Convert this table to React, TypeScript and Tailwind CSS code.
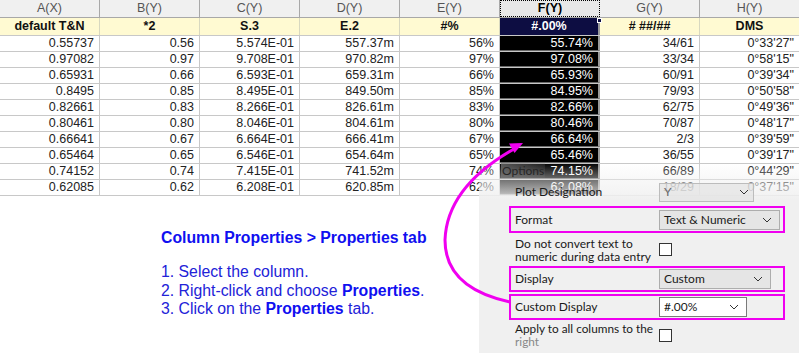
import React from "react";

const cols = ["A(X)", "B(Y)", "C(Y)", "D(Y)", "E(Y)", "F(Y)", "G(Y)", "H(Y)"];
const formats = ["default T&N", "*2", "S.3", "E.2", "#%", "#.00%", "# ##/##", "DMS"];

const rows = [
  ["0.55737", "0.56", "5.574E-01", "557.37m", "56%", "55.74%", "34/61", "0°33'27\""],
  ["0.97082", "0.97", "9.708E-01", "970.82m", "97%", "97.08%", "33/34", "0°58'15\""],
  ["0.65931", "0.66", "6.593E-01", "659.31m", "66%", "65.93%", "60/91", "0°39'34\""],
  ["0.8495", "0.85", "8.495E-01", "849.50m", "85%", "84.95%", "79/93", "0°50'58\""],
  ["0.82661", "0.83", "8.266E-01", "826.61m", "83%", "82.66%", "62/75", "0°49'36\""],
  ["0.80461", "0.80", "8.046E-01", "804.61m", "80%", "80.46%", "70/87", "0°48'17\""],
  ["0.66641", "0.67", "6.664E-01", "666.41m", "67%", "66.64%", "2/3", "0°39'59\""],
  ["0.65464", "0.65", "6.546E-01", "654.64m", "65%", "65.46%", "36/55", "0°39'17\""],
  ["0.74152", "0.74", "7.415E-01", "741.52m", "74%", "74.15%", "66/89", "0°44'29\""],
  ["0.62085", "0.62", "6.208E-01", "620.85m", "62%", "62.08%", "18/29", "0°37'15\""],
];

const SEL = 5;

function Chevron() {
  return (
    <svg width="10" height="6" viewBox="0 0 10 6" className="shrink-0">
      <path d="M1 1 L5 5 L9 1" fill="none" stroke="#333" strokeWidth="1" />
    </svg>
  );
}

function Dropdown({ value, width, white }: { value: string; width: string; white?: boolean }) {
  return (
    <div
      className={`${width} h-[20px] flex items-center justify-between pl-[4px] pr-[7px] border ${
        white ? "bg-white border-[#7a7a7a]" : "bg-[#e5e5e5] border-[#adadad]"
      }`}
    >
      <span>{value}</span>
      <Chevron />
    </div>
  );
}

function Checkbox() {
  return <div className="w-[13px] h-[13px] bg-white border border-[#333] shrink-0" />;
}

export default function App() {
  return (
    <div className="relative w-[799px] h-[353px] overflow-hidden bg-white">
      {/* worksheet */}
      <div className="font-['Liberation_Sans',Arial,sans-serif] text-[12.5px] leading-none">
        <div className="flex h-[18px] bg-[#f0f0f0] border-b border-[#a8a8a8]">
          {cols.map((c, i) => (
            <div
              key={c}
              className={`flex items-center justify-center text-[#555] ${i === 7 ? "w-[99px]" : "w-[100px] border-r border-[#a8a8a8]"} ${
                i === SEL ? "border border-dotted border-black text-black font-bold bg-[#e8e8e8]" : ""
              }`}
            >
              {c}
            </div>
          ))}
        </div>
        <div className="flex h-[18px] bg-[#fffad2] border-b border-[#c8c8c8]">
          {formats.map((f, i) => (
            <div
              key={f}
              className={`relative flex items-center justify-center font-bold ${i === 7 ? "w-[99px]" : "w-[100px] border-r border-[#d8d8c0]"} ${
                i === SEL ? "bg-[#0d0d42] text-white border-r-2 border-r-[#9a9a9a]" : "text-[#111]"
              }`}
            >
              {f}
              {i === SEL && (
                <div className="absolute right-[-4px] top-[0px] w-[5px] h-[5px] bg-[#0d0d42] border border-white" />
              )}
            </div>
          ))}
        </div>
        {rows.map((r, ri) => (
          <div key={ri} className="flex h-[16px] border-b border-[#c8c8c8]">
            {r.map((v, i) => (
              <div
                key={i}
                className={`flex items-center justify-end pr-[5px] ${i === 7 ? "w-[99px]" : "w-[100px] border-r border-[#c8c8c8]"} ${
                  i === SEL ? "bg-black text-white border-r-2 border-r-[#9a9a9a] border-b border-b-[#6a6a6a]" : "text-[#222]"
                }`}
              >
                {v}
              </div>
            ))}
          </div>
        ))}
      </div>

      {/* instructions */}
      <div className="pl-[161px] pt-[33px] font-['Liberation_Sans',Arial,sans-serif]">
        <div className="text-[15.8px] font-bold text-[#1010f0] leading-[18px]">
          Column Properties &gt; Properties tab
        </div>
        <ol className="mt-[16px] text-[15.8px] text-[#2222d8] leading-[18.5px]">
          <li>1. Select the column.</li>
          <li>
            2. Right-click and choose <b className="text-[#1010f0]">Properties</b>.
          </li>
          <li>
            3. Click on the <b className="text-[#1010f0]">Properties</b> tab.
          </li>
        </ol>
      </div>

      {/* properties dialog excerpt */}
      <div className="absolute left-[479px] top-[163px] w-[320px] h-[190px] bg-[linear-gradient(to_bottom,rgba(240,240,240,0)_0px,rgba(240,240,240,0.5)_18px,rgba(240,240,240,0.75)_30px,#f0f0f0_36px)] font-['Lato',sans-serif] text-[12px] text-[#1a1a1a] leading-[14px]">
        <div className="pl-[22px] pt-[1px] h-[16px]">
          <span className="px-[1px] text-[#262626] bg-[linear-gradient(to_right,rgba(120,120,120,0.7),rgba(120,120,120,0.2))]">
            Options
          </span>
        </div>
        <div className="flex items-center h-[22px] mt-[2px] pl-[36px]">
          <span className="w-[144px]">Plot Designation</span>
          <div className="w-[95px] h-[19px] flex items-center justify-between px-[4px] border border-[#bcbcbc] bg-[rgba(225,225,225,0.6)] text-[#666]">
            <span>Y</span>
            <Chevron />
          </div>
        </div>
        <div className="ml-[30px] w-[276px] h-[27px] mt-[3px] border-2 border-[#f000f0] flex items-center pl-[4px]">
          <span className="w-[144px]">Format</span>
          <Dropdown value="Text & Numeric" width="w-[121px]" />
        </div>
        <div className="flex items-center h-[33px] pl-[36px]">
          <span className="w-[144px] leading-[13px] whitespace-nowrap">
            Do not convert text to
            <br />
            numeric during data entry
          </span>
          <Checkbox />
        </div>
        <div className="ml-[30px] w-[276px] h-[26px] border-2 border-[#f000f0] flex items-center pl-[4px]">
          <span className="w-[144px]">Display</span>
          <Dropdown value="Custom" width="w-[112px]" />
        </div>
        <div className="ml-[30px] w-[276px] h-[26px] mt-[2px] border-2 border-[#f000f0] flex items-center pl-[4px]">
          <span className="w-[144px]">Custom Display</span>
          <Dropdown value="#.00%" width="w-[88px]" white />
        </div>
        <div className="flex items-center h-[30px] pl-[36px]">
          <span className="w-[144px] text-[11.8px] leading-[13px] whitespace-nowrap">
            Apply to all columns to the
            <br />
            <span className="text-[#888]">right</span>
          </span>
          <Checkbox />
        </div>
      </div>

      {/* callout arrow */}
      <svg className="absolute inset-0 pointer-events-none" width="799" height="353" viewBox="0 0 799 353">
        <path
          d="M510 302 Q445 288 445 240 Q447 187 514 149"
          fill="none"
          stroke="#f000f0"
          strokeWidth="3"
        />
        <polygon points="523,143 514.5,153 509,143.5" fill="#f000f0" />
      </svg>
    </div>
  );
}
